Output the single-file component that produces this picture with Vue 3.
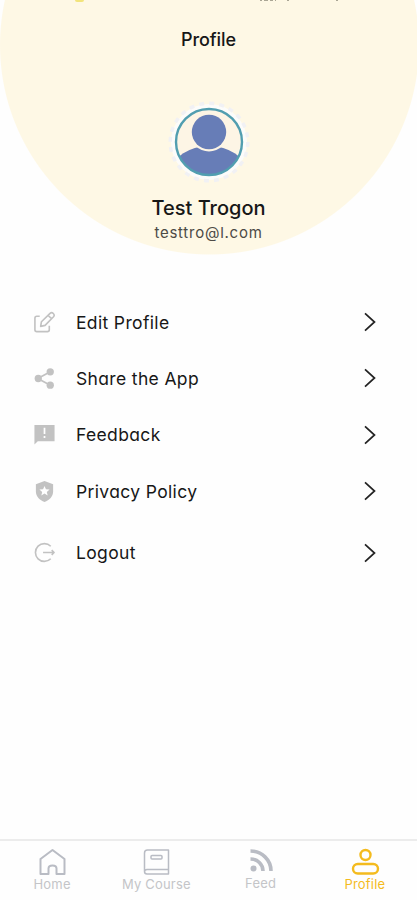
<template>
  <div class="screen">
    <header class="hero">
      <div class="status">
        <span class="status-dot"></span>
        <svg class="status-marks" width="80" height="2" viewBox="0 0 80 2">
          <path d="M1 .5h2M5 .5h4M11 .5h3M16 .5h1M28 .5h2M77 .5h2" stroke="#aaa695" />
        </svg>
      </div>
      <h1 class="title">Profile</h1>
      <svg class="avatar" width="84" height="84" viewBox="0 0 84 84">
        <defs>
          <clipPath id="face"><circle cx="42" cy="42" r="33" /></clipPath>
        </defs>
        <circle cx="42" cy="42" r="35.500" fill="none" stroke="#fcfcfa" stroke-width="5" />
        <circle cx="42" cy="42" r="38.800" fill="none" stroke="#f1f1f4" stroke-width="3.400" stroke-dasharray="5 5.157" />
        <circle cx="42" cy="42" r="33" fill="#fdf5e5" />
        <g clip-path="url(#face)">
          <ellipse cx="42" cy="72" rx="37" ry="26" fill="#677db7" />
          <circle cx="42" cy="32.5" r="19" fill="#fdf5e5" />
          <circle cx="42" cy="32" r="17.2" fill="#677db7" />
        </g>
        <circle cx="42" cy="42" r="33" fill="none" stroke="#519eb0" stroke-width="2.4" />
      </svg>
      <h2 class="name">Test Trogon</h2>
      <p class="email">testtro@l.com</p>
    </header>

    <ul class="menu">
      <li v-for="item in menu" :key="item.id" :class="['menu-item', item.id]">
        <svg class="menu-icon" width="24" height="24" viewBox="0 0 24 24">
          <g v-if="item.id === 'edit'" class="line">
            <path d="M7 5.500H4Q2 5.500 2 7.500v12q0 2 2 2h11q2 0 2-2v-4" />
            <path d="M8 16l.8-4.800L17.800 2.400q1.700-1.500 3.400.2t.2 3.400L12.600 15zM15.800 4.500l3.600 3.600" />
          </g>
          <g v-else-if="item.id === 'share'" class="solid">
            <path d="M18 5L5 12l13 7" fill="none" stroke="#c2c2c2" stroke-width="1.8" />
            <circle cx="18" cy="5" r="3.8" />
            <circle cx="5.5" cy="12" r="3.8" />
            <circle cx="18" cy="19" r="3.8" />
          </g>
          <g v-else-if="item.id === 'feedback'" class="solid">
            <path d="M1.5 2h21v17H5l-3.5 3.5z" />
            <path d="M12 5v6.5M12 13.5v2.200" stroke="#fff" stroke-width="1.8" />
          </g>
          <g v-else-if="item.id === 'privacy'" class="solid">
            <path d="M12 1l9 3.400V12c0 5-4 9.200-9 11-5-1.800-9-6-9-11V4.400z" />
            <path d="M12 6.200l1.500 3.500 3.800.3-2.900 2.500.9 3.700-3.300-2-3.300 2 .9-3.700-2.900-2.500 3.800-.3z" fill="#fff" />
          </g>
          <g v-else class="line">
            <path d="M18.500 5.500a9.300 9.300 0 1 0 0 13M10.500 12H22M19.500 9.500L22 12l-2.500 2.500" />
          </g>
        </svg>
        <span class="menu-label">{{ item.label }}</span>
        <svg class="chevron" width="12" height="20" viewBox="0 0 12 20">
          <path d="M1 1.300l9.500 8.700L1 18.700" />
        </svg>
      </li>
    </ul>

    <nav class="tabs">
      <a v-for="tab in tabs" :key="tab.id" :class="['tab', tab.id, { active: tab.id === active }]" @click="active = tab.id">
        <svg width="30" height="28" viewBox="0 0 30 28">
          <path v-if="tab.id === 'home'" d="M3.500 11L15.500 2l12 9v15h-8v-5.500q0-3-4-3t-4 3V26h-8z" />
          <g v-else-if="tab.id === 'course'" class="thin">
            <path d="M27.500 21.500V2h-21q-3 0-3 3v18.500Q3.500 26 6 26h21.500v-4.500H6q-2.500 0-2.500 2.300" />
            <rect x="10" y="7.500" width="11" height="3.500" rx="1" />
          </g>
          <g v-else-if="tab.id === 'feed'" class="feed-icon">
            <path d="M4.500 3A20.500 20 0 0 1 25 23M4.500 11A12.500 12 0 0 1 17 23" />
            <circle cx="7.500" cy="20.500" r="3" />
          </g>
          <g v-else>
            <circle cx="15.500" cy="7" r="5" />
            <rect x="3" y="16" width="25" height="9.500" rx="4.750" />
          </g>
        </svg>
        <span class="tab-label">{{ tab.label }}</span>
      </a>
    </nav>
  </div>
</template>

<script setup>
import { ref } from 'vue'

const active = ref('profile')

const menu = [
  { id: 'edit', label: 'Edit Profile' },
  { id: 'share', label: 'Share the App' },
  { id: 'feedback', label: 'Feedback' },
  { id: 'privacy', label: 'Privacy Policy' },
  { id: 'logout', label: 'Logout' }
]

const tabs = [
  { id: 'home', label: 'Home' },
  { id: 'course', label: 'My Course' },
  { id: 'feed', label: 'Feed' },
  { id: 'profile', label: 'Profile' }
]
</script>

<style>
body {
  background: #fefefe;
}
</style>

<style scoped>
.screen {
  display: flex;
  flex-direction: column;
  height: 900px;
  overflow: hidden;
  font-family: Inter, 'Open Sans', sans-serif;
  /* single-storey a */
  font-feature-settings: 'cv11';
  color: #171717;
}
.hero {
  display: flex;
  flex-direction: column;
  align-items: center;
  height: 294px;
  background: radial-gradient(circle 210px at 209.5px 45px, #fef8e5 99.5%, #fefefe 100%);
}
.status {
  display: flex;
  justify-content: space-between;
  width: 264px;
  height: 2px;
  margin-left: -4px;
}
.status-dot {
  width: 9px;
  height: 2px;
  border-radius: 0 0 5px 5px;
  background: #f2e47b;
}
.title {
  margin: 26px 0 0;
  font-size: 18px;
  line-height: 24px;
  font-weight: 500;
  letter-spacing: -0.1px;
}
.avatar {
  margin-top: 48px;
}
.name {
  margin: 11px 0 0;
  font-size: 20px;
  line-height: 26px;
  font-weight: 500;
}
.email {
  margin: 2px 0 0;
  font-size: 15px;
  line-height: 20px;
  letter-spacing: 0.75px;
  color: #4c4a45;
}
.menu {
  margin: 0;
  padding: 0 41px 0 33px;
  list-style: none;
}
.menu-item {
  display: flex;
  align-items: center;
  height: 56.3px;
}
.menu-item.logout {
  margin-top: 5.5px;
}
.menu-icon {
  width: 23px;
  height: 23px;
}
.line {
  fill: none;
  stroke: #c2c2c2;
  stroke-width: 1.7;
  stroke-linejoin: round;
}
.solid {
  fill: #c2c2c2;
}
.menu-label {
  flex: 1;
  margin-left: 20px;
  font-size: 17.5px;
  letter-spacing: 0.35px;
}
.chevron path {
  fill: none;
  stroke: #222;
  stroke-width: 1.7;
}
.tabs {
  display: grid;
  grid-template-columns: repeat(4, 1fr);
  height: 61px;
  margin-top: auto;
  border-top: 2px solid #ececec;
  box-sizing: border-box;
}
.tab {
  display: flex;
  flex-direction: column;
  align-items: center;
  padding-top: 7px;
  color: #b9bcc4;
  cursor: pointer;
}
.tab svg {
  fill: none;
  stroke: currentColor;
  stroke-width: 2;
  stroke-linejoin: round;
}
.tab .thin {
  stroke-width: 1.5;
}
.tab .feed-icon {
  stroke-width: 3.6;
}
.tab .feed-icon circle {
  fill: currentColor;
  stroke: none;
}
.tab-label {
  font-size: 13px;
  line-height: 16px;
  letter-spacing: 0.2px;
  color: #c4c5c8;
}
.tab.feed .tab-label {
  margin-top: -1px;
}
.tab.active,
.tab.active .tab-label {
  color: #f4bb1e;
}
.tab.active svg {
  stroke-width: 2.4;
}
</style>
